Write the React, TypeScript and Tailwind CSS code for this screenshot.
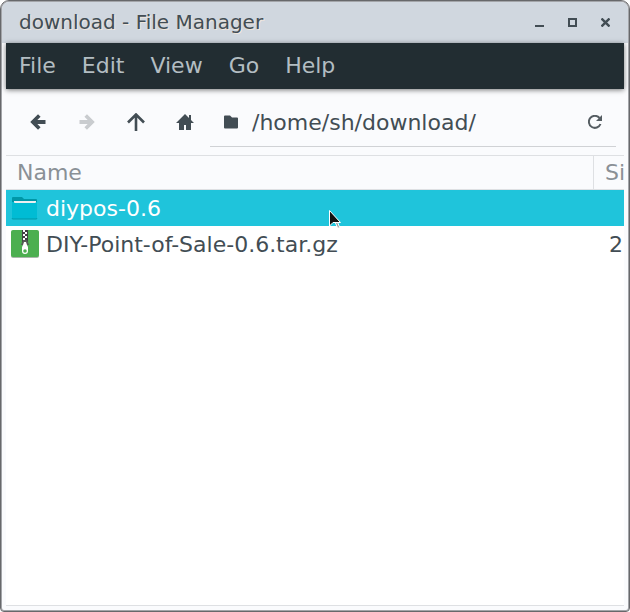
import type { ReactNode } from "react";

const menus = ["File", "Edit", "View", "Go", "Help"];

function ToolButton({ label, disabled, children }: { label: string; disabled?: boolean; children: ReactNode }) {
  return (
    <button
      type="button"
      aria-label={label}
      disabled={disabled}
      className="flex h-12 w-[49px] items-center justify-center text-[#424d54] disabled:text-[#c9cccf]"
    >
      {children}
    </button>
  );
}

function ArrowIcon({ flip }: { flip?: boolean }) {
  return (
    <svg width="16" height="16" viewBox="0 0 16 16" fill="none" stroke="currentColor" strokeWidth="4" className={flip ? "rotate-180" : ""}>
      <path d="M15.500 8H4" />
      <path d="M9.300 1.500 2.800 8l6.500 6.500" strokeWidth="3.600" />
    </svg>
  );
}

function FolderIcon() {
  return (
    <svg width="28" height="28" viewBox="0 0 28 28" className="shrink-0">
      <path d="M1 25V4q0-1 1-1h9l2 2h12q1 0 1 1v19z" fill="#0097a7" />
      <path d="M3 7h22v4H3z" fill="#eceff1" />
      <path d="M1 8h2q0 1 1 1h20q1 0 1-1h1v16q0 1-1 1H2q-1 0-1-1z" fill="#00bcd4" />
      <path d="M1 24.500q0 .500 1 .500h23q1 0 1-.500" fill="none" stroke="#0097a7" />
    </svg>
  );
}

function ArchiveIcon() {
  return (
    <svg width="28" height="28" viewBox="0 0 28 28" className="shrink-0">
      <rect y="1" width="28" height="27" rx="2" fill="#a9b8aa" />
      <rect width="28" height="27" rx="2" fill="#4caf50" />
      <path d="M11 0h6v12h-6z" fill="#424242" />
      <path d="M12 0h2v2h-2zM14 2h2v2h-2zM12 4h2v2h-2zM14 6h2v2h-2zM12 8h2v2h-2zM14 10h2v2h-2z" fill="#fff" />
      <path d="M12 10h4l2 5h-8z" fill="#555b56" />
      <path d="M12 15l1-3h2l1 3 1 2v4q0 3-3 3t-3-3v-4z" fill="#fff" />
      <circle cx="14" cy="21" r="1.800" fill="#4caf50" />
    </svg>
  );
}

export default function App() {
  return (
    <div className="relative flex h-screen flex-col overflow-hidden rounded-t-[9px] rounded-b-[4px] border border-[#67686b] bg-[#fafbfd] font-['DejaVu_Sans',sans-serif] text-[22px] text-[#424d54] shadow-[inset_0_0_0_1px_#a3a5a9]">
      <header className="m-px mb-0 flex h-[41px] shrink-0 items-center justify-between rounded-t-[7px] bg-[#d0d7df] pr-[6px] pb-px pl-[17px]">
        <h1 className="text-xl whitespace-nowrap [text-shadow:1px_1px_#f0e6dc]">download - File Manager</h1>
        <div className="flex">
          <button type="button" aria-label="Minimize" className="flex h-8 w-[33px] items-center justify-center">
            <svg width="9" height="9" viewBox="0 0 9 9" fill="currentColor">
              <path d="M0 7h9v2H0z" />
            </svg>
          </button>
          <button type="button" aria-label="Maximize" className="flex h-8 w-[33px] items-center justify-center">
            <svg width="9" height="9" viewBox="0 0 9 9" fill="none" stroke="currentColor" strokeWidth="2">
              <path d="M1 1h7v7H1z" />
            </svg>
          </button>
          <button type="button" aria-label="Close" className="flex h-8 w-[33px] items-center justify-center">
            <svg width="9" height="9" viewBox="0 0 9 9" fill="none" stroke="currentColor" strokeWidth="2.400">
              <path d="m.500.500 8 8m0-8-8 8" />
            </svg>
          </button>
        </div>
      </header>

      <div className="mx-[5px] mb-[5px] flex min-h-0 flex-1 flex-col">
        <nav className="z-10 flex h-[46px] shrink-0 items-center bg-[#222d32] text-[#b3bdc2] shadow-[0_1px_5px_#00000088]">
          {menus.map((m) => (
            <button key={m} type="button" className="px-[13px] pb-[2px]">
              {m}
            </button>
          ))}
        </nav>

        <div className="flex shrink-0 border-b border-[#dee0e3] pt-[9px] pr-2 pb-2 pl-[7px]">
          <ToolButton label="Back">
            <ArrowIcon />
          </ToolButton>
          <ToolButton label="Forward" disabled>
            <ArrowIcon flip />
          </ToolButton>
          <ToolButton label="Up">
            <svg width="18" height="18" viewBox="0 0 18 18" fill="none" stroke="currentColor" strokeWidth="2.600">
              <path d="M9 18V2M1 9.500 9 1.500 17 9.500" />
            </svg>
          </ToolButton>
          <ToolButton label="Home">
            <svg width="18" height="18" viewBox="0 0 18 18" fill="currentColor">
              <path d="M9 1 0 10h3v7h5v-5h2v5h5v-7h3l-3-3V2h-2v3z" />
            </svg>
          </ToolButton>
          <label className="ml-px flex h-[49px] min-w-0 flex-1 items-center border-b border-[#d0d2d5] px-[14px]">
            <svg width="14" height="14" viewBox="0 0 14 14" fill="currentColor" className="shrink-0">
              <path d="M0 1.500Q0 .500 1 .500h5l2 2h5q1 0 1 1v9q0 1-1 1H1q-1 0-1-1z" />
            </svg>
            <input
              type="text"
              aria-label="Location"
              defaultValue="/home/sh/download/"
              className="ml-[14px] min-w-0 flex-1 bg-transparent outline-none"
            />
            <button type="button" aria-label="Reload">
              <svg width="14" height="14" viewBox="0 0 14 14" fill="none" stroke="#555d62" strokeWidth="2">
                <path d="M12.500 9A6 6 0 1 1 11.500 3" />
                <path d="M14 0v6H8z" fill="#555d62" stroke="none" />
              </svg>
            </button>
          </label>
        </div>

        <main className="min-h-0 flex-1 overflow-hidden border-b border-[#dee0e3] bg-white">
          <table className="w-full table-fixed border-separate border-spacing-0 text-left whitespace-nowrap">
            <thead>
              <tr className="h-[34px] bg-[#fafbfd] text-[#8a9096]">
                <th className="border-b border-[#dee0e3] p-0 pl-[11px] leading-8 font-normal">Name</th>
                <th className="w-[31px] overflow-hidden border-b border-l border-[#dee0e3] p-0 pl-[11px] leading-8 font-normal">Si</th>
              </tr>
            </thead>
            <tbody>
              <tr className="h-9 bg-[#1fc4db] text-white">
                <td className="p-0 pl-[5px]">
                  <div className="flex h-9 items-center gap-[7px]">
                    <FolderIcon />
                    diypos-0.6
                  </div>
                </td>
                <td className="p-0" />
              </tr>
              <tr className="h-9">
                <td className="p-0 pl-[5px]">
                  <div className="flex h-9 items-center gap-[7px]">
                    <ArchiveIcon />
                    DIY-Point-of-Sale-0.6.tar.gz
                  </div>
                </td>
                <td className="p-0 pr-px text-right">2</td>
              </tr>
            </tbody>
          </table>
        </main>
      </div>

      <svg width="13" height="20" viewBox="0 0 13 20" className="pointer-events-none absolute top-[209px] left-[328px] z-20">
        <path d="M6 12l2.500 5.500q1 1 2-.500l-2-5z" fill="#9a9a9a" stroke="#fff" />
        <path d="M.500.500v15.500l3.500-3.500h7.500z" fill="#111" stroke="#fff" />
      </svg>
    </div>
  );
}
